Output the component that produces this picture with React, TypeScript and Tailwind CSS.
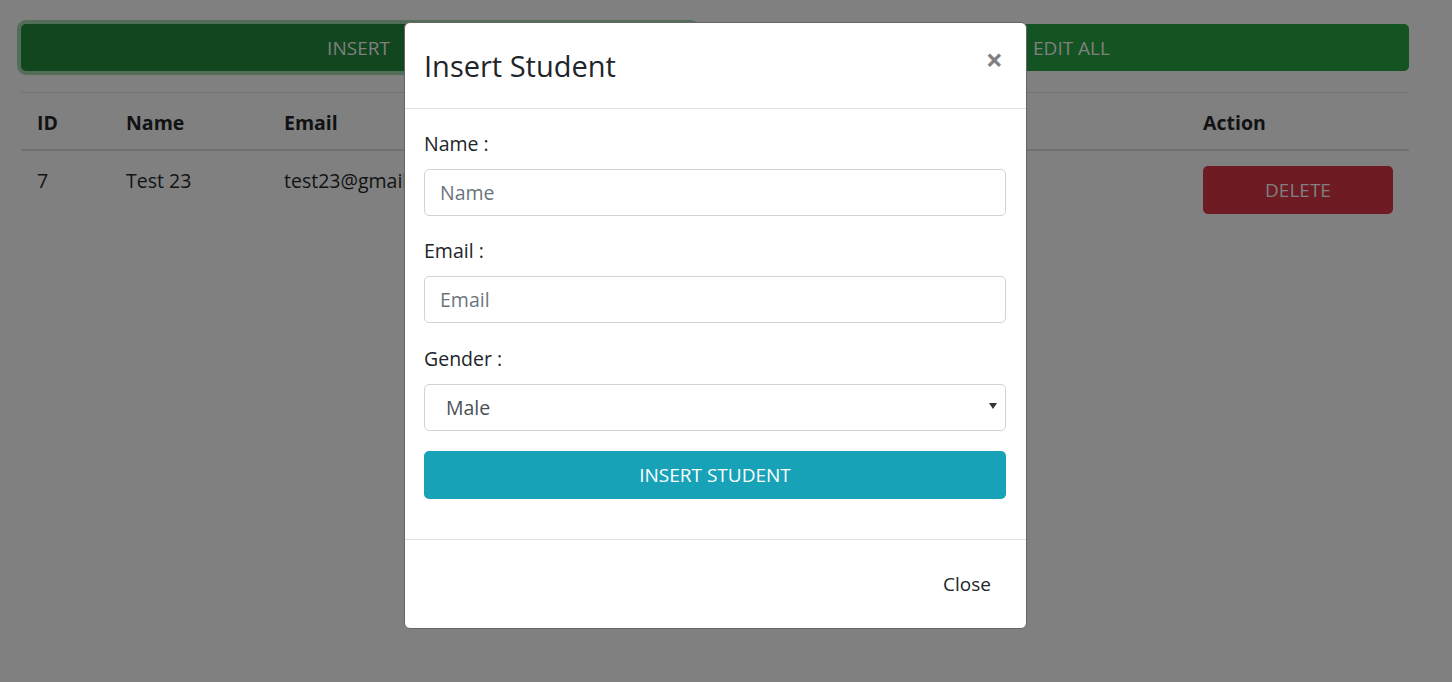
import React from "react";

const font = { fontFamily: '"Open Sans", "Noto Sans", sans-serif' };

export default function App() {
  return (
    <div
      className="relative min-h-[682px] w-full overflow-hidden bg-[#808080] text-[19.5px] leading-[30px] text-[#111213]"
      style={font}
    >
      {/* Page content (dimmed by backdrop) */}
      <div className="pl-[21px] pr-[43px] pt-[24px]">
        <div className="flex gap-[38px]">
          <button className="h-[47px] flex-1 rounded-[5px] bg-[#11461f] text-[19px] text-[#808080] shadow-[0_0_0_4px_#536e58]">
            INSERT
          </button>
          <button className="h-[47px] flex-1 rounded-[5px] bg-[#145423] text-[19px] text-[#808080]">
            EDIT ALL
          </button>
        </div>
        <div className="mt-[21px] border-t border-[#6f7173]">
          <div className="grid h-[58px] grid-cols-[90px_158px_1fr_221px] items-center border-b-2 border-[#6f7173] pt-[4px] font-bold">
            <div className="px-[16px]">ID</div>
            <div className="px-[15px]">Name</div>
            <div className="px-[15px]">Email</div>
            <div className="px-[15px]">Action</div>
          </div>
          <div className="grid grid-cols-[90px_158px_1fr_221px] items-start pt-[15px]">
            <div className="px-[16px]">7</div>
            <div className="px-[15px]">Test 23</div>
            <div className="px-[15px]">test23@gmail.com</div>
            <div className="px-[15px]">
              <button className="h-[48px] w-[190px] rounded-[5px] bg-[#6e1b23] text-[19px] text-[#808080]">
                DELETE
              </button>
            </div>
          </div>
        </div>
      </div>

      {/* Modal */}
      <div className="absolute left-[404px] top-[22px] w-[623px] rounded-[6px] border border-[#666] bg-white text-[#212529]">
        <div className="flex h-[86px] items-center justify-between border-b border-[#dee2e6] pl-[19px] pr-[20px]">
          <h4 className="text-[29px] font-normal leading-[45px] text-[#212529]">Insert Student</h4>
          <button className="-mt-[12px] mr-[3px] text-[30px] font-bold leading-none text-[#808080]">×</button>
        </div>
        <div className="pb-[40px] pl-[19px] pr-[20px] pt-[20px]">
          <div className="mb-[20px]">
            <label className="mb-[10px] block">Name :</label>
            <div className="flex h-[47px] items-center rounded-[5px] border border-[#ced4da] px-[15px] text-[#6c757d]">
              Name
            </div>
          </div>
          <div className="mb-[21px]">
            <label className="mb-[10px] block">Email :</label>
            <div className="flex h-[47px] items-center rounded-[5px] border border-[#ced4da] px-[15px] text-[#6c757d]">
              Email
            </div>
          </div>
          <div className="mb-[20px]">
            <label className="mb-[10px] block">Gender :</label>
            <div className="flex h-[47px] items-center justify-between rounded-[5px] border border-[#ced4da] pl-[21px] pr-[8px] text-[#495057]">
              <span>Male</span>
              <svg width="8" height="6" viewBox="0 0 8 6" className="mt-[-4px]">
                <path d="M0 0 L8 0 L4 6 Z" fill="#333" />
              </svg>
            </div>
          </div>
          <button className="h-[48px] w-full rounded-[5px] bg-[#17a2b8] text-[19px] text-white">
            INSERT STUDENT
          </button>
        </div>
        <div className="flex h-[89px] items-center justify-end border-t border-[#dee2e6] px-[20px]">
          <button className="px-[15px] text-[19px] text-[#212529]">Close</button>
        </div>
      </div>
    </div>
  );
}
